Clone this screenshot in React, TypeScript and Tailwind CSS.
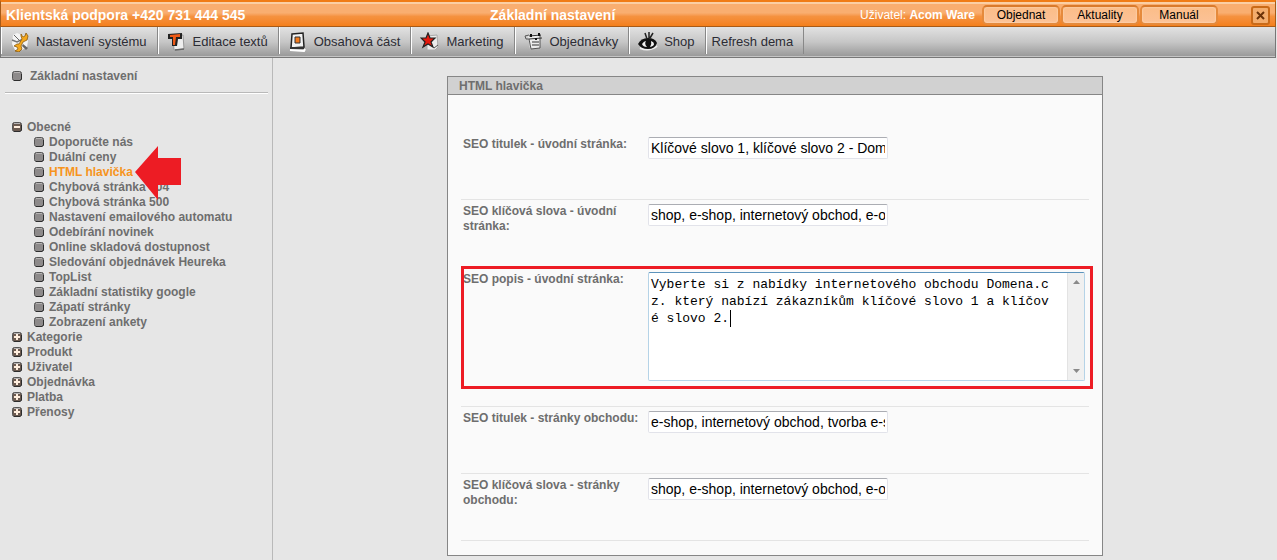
import type { ReactNode } from 'react';

interface MenuItem {
  label: string;
  icon?: ReactNode;
}

interface Field {
  id: string;
  label: string;
  value: string;
  multiline?: boolean;
}

function ToolsIcon() {
  return (
    <svg width="20" height="20" viewBox="0 0 20 20" fill="none">
      <path d="M3 3l4-2 8 3 3 5-1 6-5 3-7 0-3-6z" fill="#f4f4f4" />
      <path d="M2 8l5 2 4-2 6-1" stroke="#777" strokeWidth="1.5" />
      <path d="M11 2l2 3 2-1 1-3 2 3-1 4-4 2-2 4 1 3-3 3-4-1 3-2-1-2-3-1 3-2 2 0 3-5-1-3z" fill="#f5a81c" stroke="#8a5a10" strokeWidth="0.8" />
      <path d="M4 3l6 6" stroke="#666" />
      <path d="M13 12l5 4-2 2-4-4z" fill="#666" />
    </svg>
  );
}

function TextIcon() {
  return (
    <svg width="20" height="20" viewBox="0 0 20 20" fill="none">
      <path d="M6 4l10-1 1 14-10 1z" fill="#eee" stroke="#999" />
      <path d="M8 18l9-1" stroke="#666" strokeWidth="1.5" />
      <path d="M1 2l14-1 0 6-4 0-1 7-5 0 0-7-4 0z" fill="#222" />
      <path d="M3 3l10-1 0 3-4 0-1 8-2 0 0-8-3 0z" fill="#ef5a16" />
    </svg>
  );
}

function ContentIcon() {
  return (
    <svg width="20" height="20" viewBox="0 0 20 20" fill="none">
      <path d="M2 18l14 1 1-2" stroke="#fff" strokeWidth="2" />
      <path d="M4 2l11-1 1 14-13 1z" fill="#f2f2f2" stroke="#222" strokeWidth="1.5" />
      <path d="M2 15l14 0 0 2-14 0z" fill="#333" />
      <path d="M7 5h5v6h-5z" fill="#f37a1c" stroke="#333" />
    </svg>
  );
}

function StarIcon() {
  return (
    <svg width="20" height="20" viewBox="0 0 20 20" fill="none">
      <path d="M7 4l10-1 1 12-3 3-8 0z" fill="#ececec" stroke="#aaa" />
      <path d="M14 16l4-3" stroke="#555" />
      <path d="M8 1l2 5 5 0-4 4 2 5-5-3-5 3 2-5-4-4 5 0z" fill="#e5190d" stroke="#222" strokeWidth="1.2" />
    </svg>
  );
}

function OrdersIcon() {
  return (
    <svg width="20" height="20" viewBox="0 0 20 20" fill="none">
      <path d="M4 3l12-1 0 14-10 1z" fill="#ececec" />
      <path d="M5 3L1 4l1 3 3 0 2 10 9-1 0-13" stroke="#555" />
      <path d="M5 4l12-1" stroke="#333" />
      <path d="M5 7l13-1M8 10l7 0M8 13l7 0" stroke="#333" />
      <path d="M6 2h2v3h-2zM11 6h2v2h-2zM14 1h2v3h-2z" fill="#111" />
    </svg>
  );
}

function ShopIcon() {
  return (
    <svg width="20" height="20" viewBox="0 0 20 20" fill="none">
      <path d="M2 16q9 4 17-2" stroke="#eee" strokeWidth="2" />
      <path d="M0 12q3-6 10-6t9 5q-2 6-9 6t-10-5z" fill="#111" />
      <path d="M4 12q2-3 4-3-2 3 1 6-4 0-5-3zM13 9q3 1 3 3t-4 3q2-3 1-6z" fill="#f5f5f5" />
      <path d="M7 1l2 6M11 0l0 6M15 1l-3 5" stroke="#222" strokeWidth="1.5" />
    </svg>
  );
}

const menuItems: MenuItem[] = [
  { label: 'Nastavení systému', icon: <ToolsIcon /> },
  { label: 'Editace textů', icon: <TextIcon /> },
  { label: 'Obsahová část', icon: <ContentIcon /> },
  { label: 'Marketing', icon: <StarIcon /> },
  { label: 'Objednávky', icon: <OrdersIcon /> },
  { label: 'Shop', icon: <ShopIcon /> },
  { label: 'Refresh dema' },
];

const generalPages = [
  'Doporučte nás',
  'Duální ceny',
  'HTML hlavička',
  'Chybová stránka 404',
  'Chybová stránka 500',
  'Nastavení emailového automatu',
  'Odebírání novinek',
  'Online skladová dostupnost',
  'Sledování objednávek Heureka',
  'TopList',
  'Základní statistiky google',
  'Zápatí stránky',
  'Zobrazení ankety',
];

const closedGroups = ['Kategorie', 'Produkt', 'Uživatel', 'Objednávka', 'Platba', 'Přenosy'];

const fields: Field[] = [
  { id: 'title-home', label: 'SEO titulek - úvodní stránka:', value: 'Klíčové slovo 1, klíčové slovo 2 - Domena.cz' },
  { id: 'keywords-home', label: 'SEO klíčová slova - úvodní stránka:', value: 'shop, e-shop, internetový obchod, e-obchod' },
  {
    id: 'description-home',
    label: 'SEO popis - úvodní stránka:',
    value: 'Vyberte si z nabídky internetového obchodu Domena.cz. který nabízí zákazníkům klíčové slovo 1 a klíčové slovo 2.',
    multiline: true,
  },
  { id: 'title-shop', label: 'SEO titulek - stránky obchodu:', value: 'e-shop, internetový obchod, tvorba e-shopu' },
  { id: 'keywords-shop', label: 'SEO klíčová slova - stránky obchodu:', value: 'shop, e-shop, internetový obchod, e-obchod' },
];

function Bullet({ type }: { type?: 'plus' | 'minus' }) {
  return (
    <svg width="10" height="10" viewBox="0 0 10 10" className="mb-px shrink-0">
      <rect x="0.5" y="0.5" width="9" height="9" rx="2" fill={type ? '#6b5a50' : '#8d8a8a'} stroke="#555" />
      <path d="M2 1.5h6" stroke="#b5b2b2" />
      <path d="M9.5 3v5l-1.5 1.5H2" fill="none" stroke="#2d2d2d" />
      {type && <path d="M2 5h6" stroke="#ffeede" strokeWidth="2" />}
      {type === 'plus' && <path d="M5 2v6" stroke="#ffeede" strokeWidth="2" />}
    </svg>
  );
}

function TopButton({ label }: { label: string }) {
  return (
    <button
      type="button"
      className="h-5 w-[78px] rounded-[5px] border-2 border-[#e58a3c] border-t-[#d97a2c] bg-linear-to-b from-[#fbbd88] to-[#fcc297] text-xs leading-4 text-black shadow-[inset_0_0_2px_#ffe6cc]"
    >
      {label}
    </button>
  );
}

function Header() {
  return (
    <header className="flex h-[27px] items-center justify-between border-x border-b border-t-2 border-x-[#a85a17] border-b-[#a85a17] border-t-[#f07c16] bg-linear-to-b from-[#f9ae70] from-45% via-[#f5923f] via-60% to-[#f47f1a] px-[5px] pt-[2px] shadow-[inset_0_2px_0_#fbcfa4]">
      <div className="text-sm font-bold text-white">Klientská podpora +420 731 444 545</div>
      <h1 className="text-sm font-bold text-white">Základní nastavení</h1>
      <div className="flex items-center">
        <div className="mr-[7px] text-xs text-white">
          Uživatel: <b>Acom Ware</b>
        </div>
        <div className="flex gap-px">
          <TopButton label="Objednat" />
          <TopButton label="Aktuality" />
          <TopButton label="Manuál" />
        </div>
        <button
          type="button"
          aria-label="Zavřít"
          className="ml-[33px] flex size-[19px] items-center justify-center rounded-[3px] border-2 border-[#c96a18] bg-[#f3ac6c]"
        >
          <svg width="9" height="9" viewBox="0 0 9 9">
            <path d="M1 1l7 7M8 1l-7 7" stroke="#6b3208" strokeWidth="2" />
          </svg>
        </button>
      </div>
    </header>
  );
}

function Toolbar() {
  return (
    <nav className="flex h-[31px] border-x border-b border-x-[#777] border-b-[#777] bg-linear-to-b from-[#e2e2e2] via-[#c6c6c6] to-[#979797] pb-[3px] shadow-[inset_0_-1px_0_#c4c4c4]">
      {menuItems.map((item) => (
        <a
          key={item.label}
          href="#"
          className="flex items-center border-l border-r border-l-white border-r-[#888] pl-[5px] pr-[10px] pt-[2px] text-[13px] text-[#2c2c34]"
        >
          {item.icon && <span className="flex w-[29px] pl-[3px]">{item.icon}</span>}
          {item.label}
        </a>
      ))}
    </nav>
  );
}

function Sidebar() {
  return (
    <aside className="w-[273px] shrink-0 border-r border-[#b9b9b9] text-xs leading-[15px] font-bold text-[#6e6e6e]">
      <a href="#" className="flex items-center gap-2 pl-3 pt-[11px]">
        <Bullet />
        Základní nastavení
      </a>
      <hr className="ml-[5px] mr-1 mt-2 h-[2px] border-t border-b border-t-[#b9b9b9] border-b-white" />
      <ul className="mt-[26px]">
        <li>
          <a href="#" className="flex items-center gap-[5px] pl-3">
            <Bullet type="minus" />
            Obecné
          </a>
          <ul>
            {generalPages.map((page) => (
              <li key={page} className="relative pl-[34px]">
                <a
                  href="#"
                  className={page === 'HTML hlavička' ? 'flex items-center gap-[5px] text-[#f7941d]' : 'flex items-center gap-[5px]'}
                >
                  <Bullet />
                  {page}
                </a>
                {page === 'HTML hlavička' && (
                  <svg width="46" height="54" viewBox="0 0 46 54" className="absolute -top-[19px] left-[135px] z-10">
                    <path d="M0 26L23 0v12h23v27H23v15z" fill="#ed1c24" />
                  </svg>
                )}
              </li>
            ))}
          </ul>
        </li>
        {closedGroups.map((group) => (
          <li key={group}>
            <a href="#" className="flex items-center gap-[5px] pl-3">
              <Bullet type="plus" />
              {group}
            </a>
          </li>
        ))}
      </ul>
    </aside>
  );
}

function DescriptionBox({ field }: { field: Field }) {
  return (
    <div className="relative flex h-[109px] w-[437px] rounded-[2px] border border-[#b5d3e7] border-t-[#5c93bc] bg-white">
      <textarea
        id={field.id}
        defaultValue={field.value}
        className="h-full flex-1 resize-none overflow-hidden break-all bg-transparent py-[3px] pl-[2px] pr-[14px] font-['Liberation_Mono',monospace] text-[13px] leading-[17px] text-black outline-none"
      />
      <div className="flex w-[17px] flex-col items-center justify-between border-l border-[#e3e3e3] bg-[#f0f0f0] py-[7px]">
        <svg width="7" height="4" viewBox="0 0 7 4">
          <path d="M0 4l3.5-4L7 4z" fill="#8a8a8a" />
        </svg>
        <svg width="7" height="4" viewBox="0 0 7 4">
          <path d="M0 0l3.5 4L7 0z" fill="#8a8a8a" />
        </svg>
      </div>
      <span aria-hidden="true" className="absolute left-[81px] top-[37px] h-[17px] w-px bg-black" />
    </div>
  );
}

function FieldRow({ field }: { field: Field }) {
  return (
    <div
      className={
        field.multiline
          ? 'relative flex h-[140px] items-start border-b border-[#e4e4e4] pt-[5px]'
          : 'flex h-[67px] items-start border-b border-[#e4e4e4] pt-1'
      }
    >
      <label htmlFor={field.id} className="w-[187px] shrink-0 pl-[2px] pr-2 text-xs leading-[15px] font-bold text-[#6e6e6e]">
        {field.label}
      </label>
      {field.multiline ? (
        <DescriptionBox field={field} />
      ) : (
        <input
          id={field.id}
          type="text"
          defaultValue={field.value}
          className="h-[22px] w-[240px] rounded-[2px] border border-[#e2e3ea] border-t-[#abadb3] bg-white px-[2px] text-sm text-black outline-none"
        />
      )}
      {field.multiline && (
        <span className="pointer-events-none absolute -top-px -right-1 left-0 h-[123px] border-3 border-[#ed1c24]" />
      )}
    </div>
  );
}

export default function App() {
  return (
    <div className="flex min-h-screen flex-col bg-[#e6e6e6] font-['Liberation_Sans',Arial,sans-serif]">
      <div className="mr-px">
        <Header />
        <Toolbar />
      </div>
      <div className="flex flex-1">
        <Sidebar />
        <main className="flex-1 pt-[18px]">
          <section className="mx-auto w-full max-w-[656px] border border-[#868686] bg-[#fafafa]">
            <h2 className="h-[18px] border-b border-[#868686] bg-[#d1d1d1] pl-[11px] text-xs leading-[18px] font-bold text-[#6e6e6e]">
              HTML hlavička
            </h2>
            <form className="px-[13px] pt-[38px] pb-[14px]">
              {fields.map((field) => (
                <FieldRow key={field.id} field={field} />
              ))}
            </form>
          </section>
        </main>
      </div>
    </div>
  );
}
